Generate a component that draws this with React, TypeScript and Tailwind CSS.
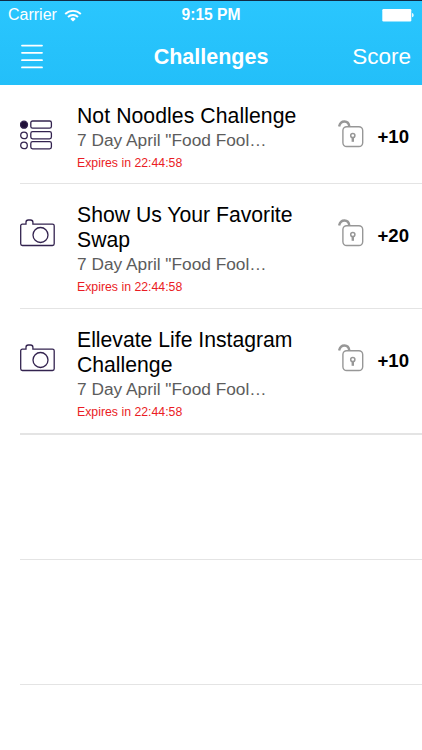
import React from 'react';

interface Challenge {
  title: string;
  subtitle: string;
  expires: string;
  points: number;
  kind: 'quiz' | 'photo';
}

const challenges: Challenge[] = [
  {
    title: 'Not Noodles Challenge',
    subtitle: '7 Day April "Food Fool…',
    expires: '22:44:58',
    points: 10,
    kind: 'quiz',
  },
  {
    title: 'Show Us Your Favorite Swap',
    subtitle: '7 Day April "Food Fool…',
    expires: '22:44:58',
    points: 20,
    kind: 'photo',
  },
  {
    title: 'Ellevate Life Instagram Challenge',
    subtitle: '7 Day April "Food Fool…',
    expires: '22:44:58',
    points: 10,
    kind: 'photo',
  },
];

const WifiIcon = () => (
  <svg width="18" height="13" viewBox="0 0 18 13" fill="none" stroke="white" strokeWidth="1.9">
    <path d="M1.2 5a11.2 11.2 0 0 1 15.6 0" />
    <path d="M4 8a7.2 7.2 0 0 1 10 0" />
    <path d="M9 12.6 6.3 9.9a3.9 3.9 0 0 1 5.4 0Z" fill="white" stroke="none" />
  </svg>
);

const BatteryIcon = () => (
  <svg width="32" height="13" viewBox="0 0 32 13" fill="white">
    <rect x="0.3" y="0" width="29" height="12.4" rx="1.2" />
    <path d="M30.1 4.1c2 .6 2 3.6 0 4.2Z" />
  </svg>
);

const MenuIcon = () => (
  <svg width="22" height="26" viewBox="0 0 22 26" stroke="white" strokeWidth="1.8" strokeLinecap="round">
    <path d="M1 1.6h20M1 8.8h20M1 16.2h20M1 23.4h20" />
  </svg>
);

const QuizIcon = () => (
  <svg width="33" height="30" viewBox="0 0 33 30" fill="none" stroke="#33234f" strokeWidth="1.3">
    <circle cx="4" cy="4.7" r="3.5" fill="#211139" />
    <circle cx="4" cy="15.4" r="3.3" />
    <circle cx="4" cy="25.4" r="3.3" />
    <rect x="10.8" y="1" width="20.6" height="7.2" rx="1.8" />
    <rect x="10.8" y="11.7" width="20.6" height="7.2" rx="1.8" />
    <rect x="10.8" y="21.7" width="20.6" height="7.2" rx="1.8" />
  </svg>
);

const CameraIcon = () => (
  <svg width="35" height="28" viewBox="0 0 35 28" fill="none" stroke="#33234f" strokeWidth="1.3">
    <path d="M2.4 5.1H6V3.2C6 1.8 7 1 8.3 1h2.2c1.4 0 2.4.8 2.4 2.2v1.9h19.6c1.1 0 1.7.7 1.7 1.7v18c0 1-.6 1.7-1.7 1.7H2.4c-1.1 0-1.7-.7-1.7-1.7v-18c0-1 .6-1.7 1.7-1.7Z" />
    <circle cx="20.5" cy="16" r="7.5" />
  </svg>
);

const UnlockIcon = () => (
  <svg width="26" height="28" viewBox="0 0 26 28" fill="none" stroke="#979797">
    <path d="M1.1 6.6C2.6-.4 10.6-.1 11.3 6.5" strokeWidth="2.4" />
    <rect x="4.9" y="6.7" width="19.8" height="19.8" rx="3.8" strokeWidth="1.4" />
    <circle cx="14.8" cy="15.5" r="2.1" strokeWidth="1.5" />
    <path d="M14.8 17.5v4.3" strokeWidth="2.4" />
  </svg>
);

const ChallengeRow: React.FC<{ challenge: Challenge; last: boolean }> = ({ challenge, last }) => {
  const isQuiz = challenge.kind === 'quiz';
  const rowStyle = isQuiz ? 'h-[99px] border-b' : last ? 'h-[126px] border-b-2' : 'h-[125px] border-b';

  return (
    <li className={`ml-5 flex border-[#e4e4e4] pt-[18px] ${rowStyle}`}>
      <div className="w-[57px] shrink-0 pt-[17px]">{isQuiz ? <QuizIcon /> : <CameraIcon />}</div>
      <div className="w-[238px] shrink-0">
        <h2 className={`text-[21.2px] leading-[25px] text-black ${isQuiz ? 'tracking-[0.07px]' : ''}`}>
          {challenge.title}
        </h2>
        <p className="text-[17.3px] leading-[24px] whitespace-nowrap text-[#5c5c5c]">{challenge.subtitle}</p>
        <p className="text-[12.3px] leading-[22px] whitespace-nowrap text-[#ea1c24]">Expires in {challenge.expires}</p>
      </div>
      <div className="ml-[23px] shrink-0 pt-[17px]">
        <UnlockIcon />
      </div>
      <span className="ml-[13.5px] pt-[22px] text-[18.6px] leading-[24px] font-bold text-black">
        +{challenge.points}
      </span>
    </li>
  );
};

const App: React.FC = () => {
  return (
    <div className="h-[750px] w-[422px] overflow-hidden bg-white font-['Liberation_Sans',Arial,sans-serif]">
      <header className="h-[85px] border-t border-[#102b45] bg-linear-to-b from-[#2ac6fe] to-[#23bff9] text-white">
        <div className="grid h-[28px] grid-cols-[1fr_auto_1fr] items-center pr-2 pl-2">
          <div className="flex items-center gap-[7px] text-[16px]">
            Carrier
            <WifiIcon />
          </div>
          <span className="text-center text-[15.6px] font-bold">9:15 PM</span>
          <div className="flex justify-end">
            <BatteryIcon />
          </div>
        </div>
        <nav className="grid h-[55px] grid-cols-[1fr_auto_1fr] items-center pr-[11px] pl-[11px]">
          <div className="pl-[10px]">
            <MenuIcon />
          </div>
          <h1 className="pt-px text-center text-[21.5px] font-bold">Challenges</h1>
          <span className="text-right text-[22.5px]">Score</span>
        </nav>
      </header>
      <ul>
        {challenges.map((challenge, index) => (
          <ChallengeRow key={challenge.title} challenge={challenge} last={index === challenges.length - 1} />
        ))}
        {/* empty rows below the list */}
        <li className="ml-5 h-[125px] border-b border-[#e4e4e4]"></li>
        <li className="ml-5 h-[125px] border-b border-[#e4e4e4]"></li>
      </ul>
    </div>
  );
};

export default App;
